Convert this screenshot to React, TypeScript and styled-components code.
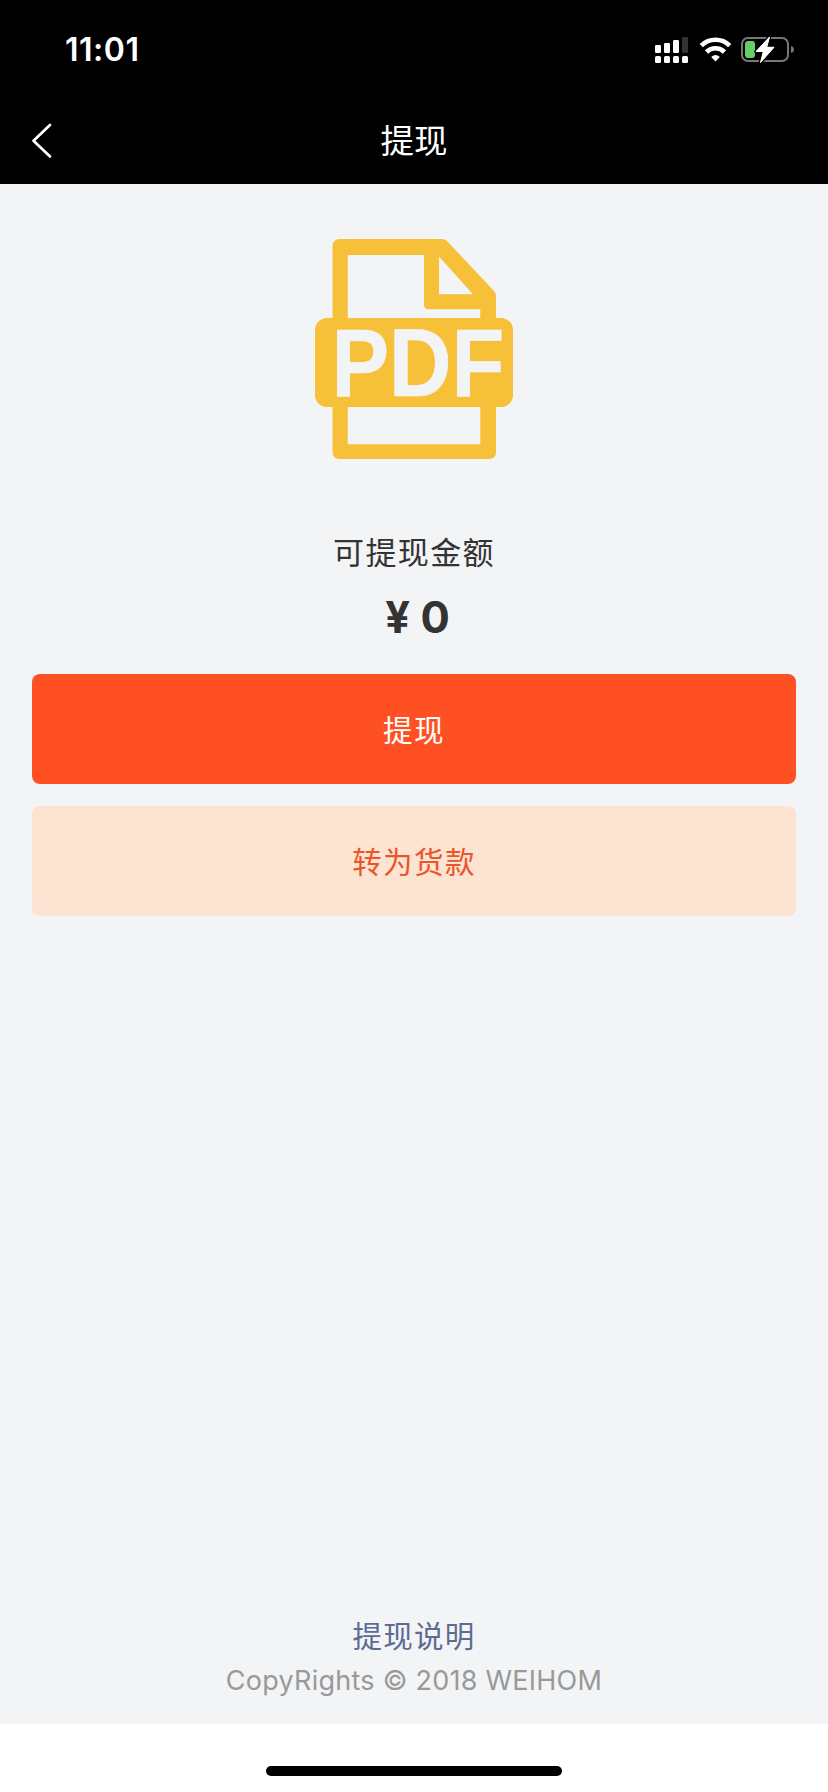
import React from 'react';
import styled, { createGlobalStyle } from 'styled-components';

const GlobalStyle = createGlobalStyle`
  * { box-sizing: border-box; }
  body { margin: 0; background: #fff; }
`;

const Screen = styled.div`
  width: 828px;
  height: 1792px;
  display: flex;
  flex-direction: column;
  overflow: hidden;
  font-family: Inter, 'Noto Sans CJK SC', sans-serif;
`;

const StatusBar = styled.div`
  height: 96px;
  flex: none;
  display: flex;
  align-items: center;
  justify-content: space-between;
  padding: 3px 33px 0 65px;
  background: #000;
  color: #fff;
`;

const Time = styled.span`
  font-size: 32px;
  font-weight: 600;
  line-height: 40px;
  letter-spacing: 0.5px;
`;

const StatusIcons = styled.div`
  display: flex;
  align-items: center;
`;

const NavBar = styled.header`
  height: 88px;
  flex: none;
  display: grid;
  grid-template-columns: 84px 1fr 84px;
  align-items: center;
  background: #000;
  color: #fff;
`;

const BackButton = styled.button`
  height: 88px;
  padding: 2px 0 0 28px;
  border: 0;
  background: none;
  color: inherit;
  display: flex;
  align-items: center;
`;

const Title = styled.h1`
  margin: 0;
  padding-top: 2px;
  text-align: center;
  font-size: 33.5px;
  font-weight: 400;
  line-height: 48px;
`;

const Content = styled.main`
  flex: 1;
  display: flex;
  flex-direction: column;
  align-items: center;
  padding: 55px 32px 0;
  background: #f2f4f6;
`;

const Label = styled.p`
  margin: 71px 0 0;
  color: #333;
  font-size: 31px;
  line-height: 44px;
  letter-spacing: 1.4px;
`;

const Amount = styled.p`
  margin: 14px 0 29px;
  padding-left: 7px;
  color: #333;
  font-size: 43.5px;
  font-weight: 700;
  line-height: 56px;
`;

const Button = styled.button<{ $light?: boolean }>`
  width: 100%;
  height: 110px;
  margin-bottom: 22px;
  padding: 0 0 3px;
  border: 0;
  border-radius: 8px;
  font: inherit;
  font-size: 29.5px;
  letter-spacing: 1.4px;
  background: ${(p) => (p.$light ? '#fde3d1' : '#ff5023')};
  color: ${(p) => (p.$light ? '#ea5529' : '#fff')};
`;

const Footer = styled.footer`
  margin-top: auto;
  padding-bottom: 21px;
  text-align: center;
`;

const HelpLink = styled.a`
  display: block;
  color: #5c6b92;
  font-size: 29.5px;
  line-height: 44px;
  letter-spacing: 1.3px;
`;

const Copyright = styled.p`
  margin: 1px 0 0;
  color: #999;
  font-size: 27px;
  line-height: 44px;
  letter-spacing: 0.25px;
`;

const HomeArea = styled.div`
  height: 68px;
  flex: none;
  display: flex;
  justify-content: center;
  padding-top: 42px;
  background: #fff;
`;

const HomeIndicator = styled.div`
  width: 296px;
  height: 10px;
  border-radius: 5px;
  background: #000;
`;

const SignalIcons = () => (
  <svg width="142" height="30" viewBox="653 35 142 30">
    <g fill="#fff">
      <rect x="655" y="45" width="6" height="8" rx="1.3" />
      <rect x="664" y="43" width="6" height="10" rx="1.3" />
      <rect x="673" y="40" width="6" height="13" rx="1.3" />
      <rect x="655" y="56" width="6" height="7" rx="1.5" />
      <rect x="664" y="56" width="6" height="7" rx="1.5" />
      <rect x="673" y="56" width="6" height="7" rx="1.5" />
      <rect x="682" y="56" width="6" height="7" rx="1.5" />
    </g>
    <rect x="682" y="37" width="6" height="16" rx="1.3" fill="#333" />
    <g fill="none" stroke="#fff" strokeWidth="4.6">
      <path d="M701.3 45.6 A20.3 20.3 0 0 1 729.7 45.6" />
      <path d="M706.5 52 A12.8 12.8 0 0 1 724.5 52" />
    </g>
    <path d="M711.2 57 Q715.5 52.800 719.8 57 L715.5 61.5 Z" fill="#fff" />
    <rect x="742" y="38" width="46" height="23" rx="6" fill="none" stroke="#777" strokeWidth="2" />
    <path d="M791 46 Q794 47 794 49.5 Q794 52 791 53 Z" fill="#777" />
    <rect x="745" y="41" width="10" height="17" rx="3" fill="#65cf66" />
    <path
      d="M769.5 37 L756 51.5 H763.3 L760.5 62.5 L774 47.3 H766.7 Z"
      fill="#fff" stroke="#000" strokeWidth="3.6" strokeLinejoin="round" paintOrder="stroke"
    />
    <path
      d="M769.5 37 L756 51.5 H763.3 L760.5 62.5 L774 47.3 H766.7 Z"
      fill="#fff" stroke="#fff" strokeWidth="1" strokeLinejoin="round"
    />
  </svg>
);

const BackIcon = () => (
  <svg width="26" height="38" viewBox="0 0 26 38" fill="none">
    <path d="M22 3 L5.5 18.7 L22 34.5" stroke="#fff" strokeWidth="2.7" strokeLinecap="round" strokeLinejoin="round" />
  </svg>
);

const PdfIcon = () => (
  <svg width="198" height="221" viewBox="315 239 198 221">
    <path
      fill="#f6c038" fillRule="evenodd"
      d="M340 239 H442 Q445 239 447 241 L494 291 Q496 293 496 297 V452 Q496 459 489 459 H340 Q332.500 459 332.500 452 V247 Q332.500 239 340 239 Z
         M347.700 255 V318 H480.300 V309.300 H429 Q424 309.300 424 304.500 V255 Z
         M439 256.500 V294.300 H473 Z
         M347.700 407 V444.300 H480.300 V407 Z"
    />
    <rect x="315" y="318" width="198" height="89" rx="12" fill="#f6c038" />
    <text
      transform="translate(331.4 395.800) scale(.905 1)"
      fontFamily="'Liberation Sans', Arial, sans-serif" fontWeight="700" fontSize="95.5"
      fill="#f2f4f6" stroke="#f2f4f6" strokeWidth="0.7"
    >PDF</text>
  </svg>
);

export default function App() {
  return (
    <>
      <GlobalStyle />
      <Screen>
        <StatusBar>
          <Time>11:01</Time>
          <StatusIcons><SignalIcons /></StatusIcons>
        </StatusBar>
        <NavBar>
          <BackButton aria-label="返回"><BackIcon /></BackButton>
          <Title>提现</Title>
        </NavBar>
        <Content>
          <PdfIcon />
          <Label>可提现金额</Label>
          <Amount>¥ 0</Amount>
          <Button>提现</Button>
          <Button $light>转为货款</Button>
          <Footer>
            <HelpLink>提现说明</HelpLink>
            <Copyright>CopyRights © 2018 WEIHOM</Copyright>
          </Footer>
        </Content>
        <HomeArea><HomeIndicator /></HomeArea>
      </Screen>
    </>
  );
}
